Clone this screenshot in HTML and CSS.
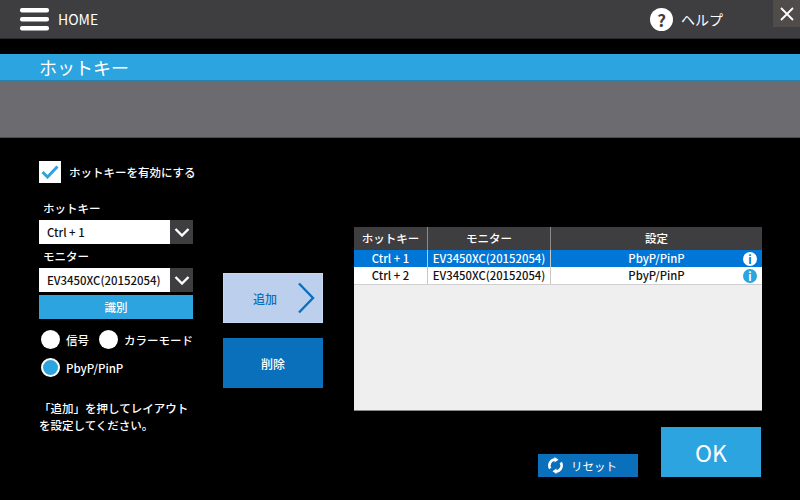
FILE: index.html
```html
<!DOCTYPE html>
<html lang="ja">
<head>
<meta charset="utf-8">
<title>ホットキー</title>
<link rel="stylesheet" href="styles.css">
</head>
<body>
<header class="topbar">
  <div class="home">
    <svg class="burger" width="29" height="23" viewBox="0 0 29 23"><rect x="0" y="0" width="29" height="4.5" rx="2" fill="#fff"/><rect x="0" y="9" width="29" height="4.5" rx="2" fill="#fff"/><rect x="0" y="18" width="29" height="4.5" rx="2" fill="#fff"/></svg>
    <span>HOME</span>
  </div>
  <div class="help">
    <span class="help-icon">?</span>
    <span>ヘルプ</span>
  </div>
  <div class="close">
    <svg width="16" height="16" viewBox="0 0 16 16"><path d="M2 2L14 14M14 2L2 14" stroke="#fff" stroke-width="1.8" fill="none"/></svg>
  </div>
</header>
<div class="titlebar">ホットキー</div>
<div class="band"></div>
<main class="main">
  <section class="left">
    <label class="enable">
      <span class="checkbox"><svg width="18" height="14" viewBox="0 0 18 14"><path d="M1.5 7L6.5 12L16.5 1.5" stroke="#2ba4e0" stroke-width="3" fill="none"/></svg></span>
      <span>ホットキーを有効にする</span>
    </label>
    <div class="field-label first">ホットキー</div>
    <div class="select">
      <span class="select-value">Ctrl + 1</span>
      <span class="select-arrow"><svg width="16" height="9" viewBox="0 0 16 9"><path d="M1.5 1L8 7.5L14.5 1" stroke="#fff" stroke-width="2.4" fill="none"/></svg></span>
    </div>
    <div class="field-label second">モニター</div>
    <div class="select">
      <span class="select-value">EV3450XC(20152054)</span>
      <span class="select-arrow"><svg width="16" height="9" viewBox="0 0 16 9"><path d="M1.5 1L8 7.5L14.5 1" stroke="#fff" stroke-width="2.4" fill="none"/></svg></span>
    </div>
    <button class="identify">識別</button>
    <div class="radios">
      <div class="radio-row">
        <span class="radio"></span><span class="radio-text">信号</span>
        <span class="radio second-radio"></span><span class="radio-text">カラーモード</span>
      </div>
      <div class="radio-row">
        <span class="radio selected"></span><span class="radio-text">PbyP/PinP</span>
      </div>
    </div>
    <p class="note">「追加」を押してレイアウト<br>を設定してください。</p>
  </section>
  <section class="middle">
    <button class="add">
      <span class="add-text">追加</span>
      <svg class="add-arrow" width="18" height="32" viewBox="0 0 18 32"><path d="M2 1.5L16 16L2 30.5" stroke="#0a70bc" stroke-width="2.4" fill="none"/></svg>
    </button>
    <button class="delete">削除</button>
  </section>
  <section class="right">
    <div class="table">
      <div class="row head">
        <div class="cell c1">ホットキー</div>
        <div class="cell c2">モニター</div>
        <div class="cell c3">設定</div>
      </div>
      <div class="row active">
        <div class="cell c1">Ctrl + 1</div>
        <div class="cell c2">EV3450XC(20152054)</div>
        <div class="cell c3">PbyP/PinP<span class="info">i</span></div>
      </div>
      <div class="row plain">
        <div class="cell c1">Ctrl + 2</div>
        <div class="cell c2">EV3450XC(20152054)</div>
        <div class="cell c3">PbyP/PinP<span class="info">i</span></div>
      </div>
    </div>
    <div class="actions">
      <button class="reset">
        <svg width="17" height="17" viewBox="0 0 17 17"><path d="M3.2 11.5A6 6 0 0 1 8 2.5" stroke="#fff" stroke-width="2.6" fill="none"/><path d="M13.8 5.5A6 6 0 0 1 9 14.5" stroke="#fff" stroke-width="2.6" fill="none"/><path d="M7.5 0L11.5 2.8L7.5 5.5Z" fill="#fff"/><path d="M9.5 11.5L5.5 14.2L9.5 17Z" fill="#fff"/></svg>
        <span>リセット</span>
      </button>
      <button class="ok">OK</button>
    </div>
  </section>
</main>
</body>
</html>
```

FILE: styles.css
```css
* { box-sizing: border-box; }
html, body { margin: 0; padding: 0; }
body {
  width: 800px;
  height: 500px;
  overflow: hidden;
  background: #000;
  color: #fff;
  font-family: "Noto Sans CJK JP", "Noto Sans", sans-serif;
  font-size: 11.5px;
  font-weight: 500;
}
button { font-family: inherit; font-weight: inherit; border: 0; padding: 0; color: #fff; }

.topbar {
  position: relative;
  height: 39px;
  background: #3e3d40;
  border-bottom: 1px solid #2a2a2c;
  display: flex;
  align-items: center;
  justify-content: space-between;
  padding-left: 20px;
}
.home { display: flex; align-items: center; gap: 9px; font-size: 14px; font-weight: 400; }
.help {
  display: flex;
  align-items: center;
  gap: 8px;
  font-size: 14px;
  font-weight: 400;
  margin-right: 77px;
}
.help-icon {
  width: 23px;
  height: 23px;
  border-radius: 50%;
  background: #fff;
  color: #3e3d40;
  font-size: 17px;
  font-weight: 700;
  line-height: 23px;
  text-align: center;
}
.close {
  position: absolute;
  right: 0;
  top: 0;
  width: 27px;
  height: 27px;
  background: #4f4c4a;
  display: flex;
  align-items: center;
  justify-content: center;
}

.titlebar {
  margin-top: 15px;
  height: 27px;
  background: #2ba4e0;
  border-bottom: 1px solid #2a7fae;
  padding-left: 39px;
  font-size: 18px;
  font-weight: 400;
  line-height: 26px;
}
.band {
  height: 57px;
  background: #6c6b70;
  border-bottom: 1px solid #4c4b4f;
}

.main { display: flex; padding-left: 39px; }
.left { width: 154px; padding-top: 23px; }
.enable { display: flex; align-items: center; gap: 8px; width: 170px; height: 22px; }
.checkbox {
  width: 22px;
  height: 22px;
  background: #fff;
  display: flex;
  align-items: center;
  justify-content: center;
}
.field-label { line-height: 16px; padding-left: 4px; }
.field-label.first { margin-top: 17px; margin-bottom: 4px; }
.field-label.second { margin-top: 4px; margin-bottom: 4px; }
.select { display: flex; height: 24px; background: #fff; color: #111; }
.select-value { flex: 1; font-size: 11.4px; line-height: 24px; padding-left: 8px; white-space: nowrap; }
.select-arrow {
  width: 23px;
  flex: none;
  background: #3e3d40;
  display: flex;
  align-items: center;
  justify-content: center;
}
.identify {
  display: block;
  width: 100%;
  height: 24px;
  margin-top: 3px;
  background: #2ba4e0;
  font-size: 11.5px;
}
.radios { margin-top: 11px; }
.radio-row { display: flex; align-items: center; height: 19px; margin-bottom: 9px; width: 170px; }
.radio {
  width: 19px;
  height: 19px;
  border-radius: 50%;
  background: #fff;
  margin-left: 2px;
  margin-right: 6px;
}
.radio.selected { background: #2ba4e0; border: 2.5px solid #fff; }
.second-radio { margin-left: 10px; }
.radio-text { font-size: 11.5px; white-space: nowrap; }
.note { margin: 23px 0 0 0; width: 170px; line-height: 17px; }

.middle { width: 100px; margin-left: 30px; padding-top: 135px; }
.add {
  position: relative;
  display: block;
  width: 100px;
  height: 50px;
  padding-right: 16px;
  background: #bccfec;
  border: 1px solid #c7d7ef;
}
.add-text { color: #0a70bc; font-size: 12px; }
.add-arrow { position: absolute; right: 7px; top: 8px; }
.delete {
  display: block;
  width: 100px;
  height: 50px;
  margin-top: 15px;
  background: #0a70bc;
  font-size: 12px;
}

.right { width: 408px; margin-left: 31px; padding-top: 89px; }
.table { height: 184px; background: #efefef; border-bottom: 1px solid #888; }
.row { display: flex; height: 17px; font-size: 11.3px; line-height: 17px; text-align: center; }
.row.head { height: 23px; background: #3e3d40; color: #fff; line-height: 23px; font-size: 11.5px; }
.row.active { background: #0076d6; color: #fff; }
.row.plain { background: #fff; color: #111; height: 18px; border-bottom: 1px solid #cfcfcf; }
.cell { position: relative; border-right: 1px solid #8a8a8a; white-space: nowrap; }
.row.active .cell, .row.plain .cell { border-right-color: #c8c8c8; }
.c1 { width: 74px; }
.c2 { width: 123px; }
.c3 { flex: 1; border-right: 0; }
.info {
  position: absolute;
  right: 5px;
  top: 2px;
  width: 14px;
  height: 14px;
  border-radius: 50%;
  background: #2ba4e0;
  color: #fff;
  font-size: 11px;
  font-weight: 700;
  line-height: 14px;
  text-align: center;
}
.row.active .info { background: #fff; color: #0076d6; }

.actions {
  display: flex;
  justify-content: flex-end;
  align-items: flex-end;
  gap: 23px;
  margin-top: 16px;
  padding-right: 1px;
}
.reset {
  width: 100px;
  height: 23px;
  background: #0a70bc;
  display: flex;
  align-items: center;
  gap: 7px;
  padding-left: 9px;
  font-size: 11.5px;
  font-weight: 400;
}
.ok {
  width: 100px;
  height: 50px;
  background: #2ba4e0;
  font-size: 23px;
  font-weight: 400;
}
```
